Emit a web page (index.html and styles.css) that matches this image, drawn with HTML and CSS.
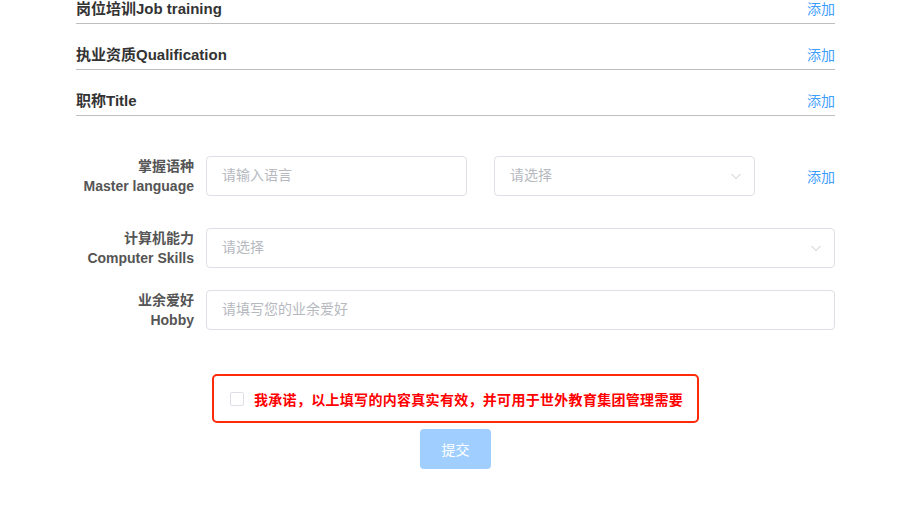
FILE: index.html
```html
<!DOCTYPE html>
<html lang="zh">
<head>
<meta charset="utf-8">
<title>Form</title>
<link rel="stylesheet" href="styles.css">
</head>
<body>
<div class="page">
  <div class="section-row first">
    <span class="section-title">岗位培训Job training</span>
    <a class="add-link">添加</a>
  </div>
  <div class="section-row">
    <span class="section-title">执业资质Qualification</span>
    <a class="add-link">添加</a>
  </div>
  <div class="section-row">
    <span class="section-title">职称Title</span>
    <a class="add-link">添加</a>
  </div>

  <div class="form">
    <div class="form-item item-lang">
      <label class="form-label">掌握语种<br>Master language</label>
      <div class="form-content lang-content">
        <div class="input half"><span class="placeholder">请输入语言</span></div>
        <div class="input half select"><span class="placeholder">请选择</span>
          <svg class="chevron" viewBox="0 0 12 12" width="12" height="12"><path d="M1.5 4 L6 8.5 L10.5 4" fill="none" stroke="#c0c4cc" stroke-width="1"/></svg>
        </div>
        <a class="add-link lang-add">添加</a>
      </div>
    </div>
    <div class="form-item">
      <label class="form-label">计算机能力<br>Computer Skills</label>
      <div class="form-content">
        <div class="input full select"><span class="placeholder">请选择</span>
          <svg class="chevron" viewBox="0 0 12 12" width="12" height="12"><path d="M1.5 4 L6 8.5 L10.5 4" fill="none" stroke="#c0c4cc" stroke-width="1"/></svg>
        </div>
      </div>
    </div>
    <div class="form-item">
      <label class="form-label">业余爱好<br>Hobby</label>
      <div class="form-content">
        <div class="input full"><span class="placeholder">请填写您的业余爱好</span></div>
      </div>
    </div>
  </div>

  <div class="promise-wrap">
    <div class="promise">
      <span class="checkbox"></span>
      <span class="promise-text">我承诺，以上填写的内容真实有效，并可用于世外教育集团管理需要</span>
    </div>
  </div>
  <div class="submit-wrap">
    <button class="submit">提交</button>
  </div>
</div>
</body>
</html>
```
FILE: styles.css
```css
html, body {
  margin: 0;
  padding: 0;
  background: #fff;
  font-family: "Liberation Sans", "Noto Sans CJK SC", sans-serif;
  font-size: 14px;
  overflow: hidden;
}

.page {
  width: 759px;
  margin: -22px 0 0 76px;
}

.section-row {
  display: flex;
  justify-content: space-between;
  align-items: center;
  padding: 21px 0 4px;
  line-height: 20px;
  border-bottom: 1px solid #bfbfbf;
}

.section-title {
  font-weight: bold;
  color: #333;
  font-size: 15px;
}

.add-link {
  color: #409eff;
  font-size: 14px;
  cursor: pointer;
}

.form {
  margin-top: 40px;
}

.form-item {
  display: flex;
  margin-bottom: 22px;
}

.form-item.item-lang {
  margin-bottom: 32px;
}

.form-label {
  width: 130px;
  box-sizing: border-box;
  padding-right: 12px;
  text-align: right;
  line-height: 20px;
  font-weight: bold;
  color: #555;
  font-size: 14px;
}

.form-content {
  flex: 1;
  display: flex;
  align-items: center;
}

.lang-content {
  gap: 27px;
}

.input {
  height: 40px;
  box-sizing: border-box;
  border: 1px solid #dcdfe6;
  border-radius: 4px;
  padding: 0 15px;
  display: flex;
  align-items: center;
  justify-content: space-between;
  line-height: 18px;
}

.input.half {
  width: 261px;
}

.input.full {
  flex: 1;
}

.placeholder {
  color: #b6b9c0;
  font-size: 14px;
  margin-top: -2px;
}

.chevron {
  margin-right: -3px;
}

.lang-add {
  margin-left: auto;
}

.promise-wrap {
  display: flex;
  justify-content: center;
  margin-top: 44px;
}

.promise {
  width: 487px;
  height: 49px;
  box-sizing: border-box;
  border: 2px solid #ff2a0a;
  border-radius: 5px;
  display: flex;
  align-items: center;
  padding-left: 16px;
  gap: 10px;
}

.checkbox {
  width: 14px;
  height: 14px;
  box-sizing: border-box;
  border: 1px solid #dcdfe6;
  border-radius: 2px;
  background: #fff;
}

.promise-text {
  color: #ff0000;
  font-weight: bold;
  font-size: 14px;
  letter-spacing: 0.3px;
}

.submit-wrap {
  display: flex;
  justify-content: center;
  margin-top: 6px;
}

.submit {
  width: 71px;
  height: 40px;
  border: none;
  border-radius: 4px;
  background: #a0cfff;
  color: #fff;
  font-family: "Liberation Sans", "Noto Sans CJK SC", sans-serif;
  font-size: 14px;
  padding: 0;
}
```
